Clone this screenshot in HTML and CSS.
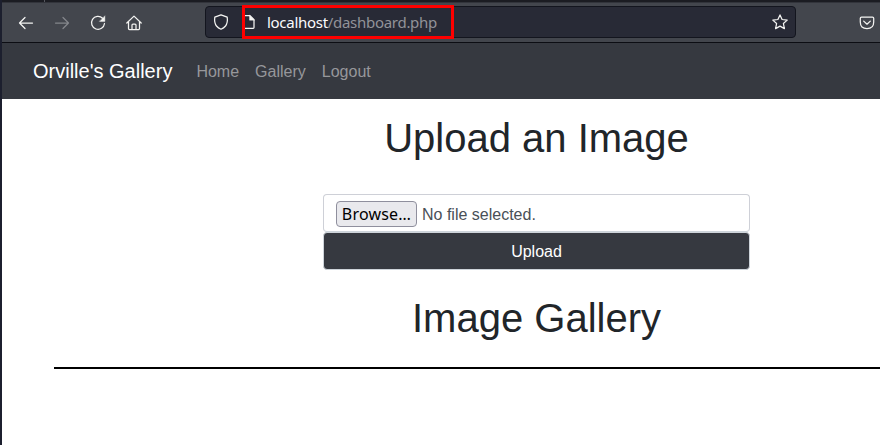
FILE: index.html
```html
<!DOCTYPE html>
<html lang="en">
<head>
<meta charset="utf-8">
<title>Orville's Gallery</title>
<link rel="stylesheet" href="styles.css">
</head>
<body>
<div class="browser">
  <div class="tabstrip"><i></i></div>
  <header class="toolbar">
    <svg class="icon back" viewBox="0 0 16 16"><path d="M14.5 8H1.5M7 2.5L1.5 8L7 13.5"/></svg>
    <svg class="icon forward" viewBox="0 0 16 16"><path d="M1.5 8H14.5M9 2.5L14.5 8L9 13.5"/></svg>
    <svg class="icon reload" viewBox="0 0 16 16"><path d="M12.6 3.2A6.5 6.5 0 1 0 14.5 8.5"/><path class="solid" d="M14.9 1.1V6.4H9.6Z"/></svg>
    <svg class="icon home" viewBox="0 0 16 16"><path d="M.8 8L8 1.1L15.2 8M2.5 7V13.5Q2.5 14.5 3.5 14.5H12.5Q13.5 14.5 13.5 13.5V7M6 14V10Q6 9 7 9H9Q10 9 10 10V14"/></svg>
    <div class="address">
      <svg class="icon shield" viewBox="0 0 16 16"><path d="M8 .8L14.2 3.2Q15 9 12.5 12Q10.8 14 8 15.2Q5.2 14 3.5 12Q1 9 1.8 3.2Z"/></svg>
      <svg class="icon file" viewBox="0 0 16 16"><path d="M3 1.7H9L13 5.7V13.5Q13 14.3 12.2 14.3H3"/><path class="solid" d="M8.5 1.5V6.2H13.3Z"/></svg>
      <span class="url">localhost<span>/dashboard.php</span></span>
      <svg class="icon star" viewBox="0 0 16 16"><path d="M8 .9L10.1 5.5L15.2 6.1L11.4 9.5L12.4 14.6L8 12.1L3.6 14.6L4.6 9.5L.8 6.1L5.9 5.5Z"/></svg>
      <div class="highlight"></div>
    </div>
    <svg class="icon pocket" viewBox="0 0 16 16"><path d="M2.5 2.1H13.5Q14.7 2.1 14.7 3.3V7Q14.7 13.6 8 13.6Q1.3 13.6 1.3 7V3.3Q1.3 2.1 2.5 2.1ZM4.7 6.1L8 9.2L11.3 6.1"/></svg>
  </header>
  <div class="page">
    <nav class="navbar">
      <a class="brand">Orville's Gallery</a>
      <a>Home</a><a>Gallery</a><a>Logout</a>
    </nav>
    <main>
      <h1>Upload an Image</h1>
      <form class="upload">
        <div class="picker"><span class="browse">Browse…</span><span class="status">No file selected.</span></div>
        <div class="submit">Upload</div>
      </form>
      <h1>Image Gallery</h1>
      <div class="rule"></div>
    </main>
  </div>
</div>
</body>
</html>
```
FILE: styles.css
```css
* { box-sizing: border-box; }
body { margin: 0; background: #fff; overflow: hidden; }
.browser { height: 445px; border-left: 2px solid #1c1f2e; overflow: hidden; }
.tabstrip { height: 2px; background: #1b1c22; padding-left: 42px; }
.tabstrip i { display: block; width: 1px; height: 2px; background: #55575e; }
.toolbar {
  height: 41px; display: flex; align-items: center;
  width: 878px; padding-left: 16px; background: #43464d;
  border-top: 1px solid #32343b; border-bottom: 1px solid #0c0d13;
}
.icon {
  width: 16px; height: 16px; flex: none; fill: none; stroke: #f4f4f2;
  stroke-width: 1.25; stroke-linecap: round; stroke-linejoin: round;
}
.solid { fill: #f4f4f2; stroke-width: .4; }
.forward { margin-left: 20px; stroke: #84868b; }
.reload, .home { margin-left: 20px; }
.address {
  position: relative; display: flex; align-items: center;
  width: 591px; height: 32px; margin: 0 0 1px 63px; padding: 0 7px;
  background: #282a36; border: 1px solid #13151e; border-radius: 4px;
}
.file { margin-left: 12px; }
.url {
  margin-left: 10px; font: 15px/20px "Noto Sans", sans-serif; letter-spacing: -.29px;
  color: #fbfbfe; white-space: nowrap;
}
.url span { color: #929299; }
.star { margin-left: auto; }
.highlight { position: absolute; left: 36px; top: -2px; width: 212px; height: 34px; border: 3px solid #fe0000; }
.pocket { margin-left: 63px; }
.page { width: 1069px; font-family: "Liberation Sans", Arial, sans-serif; color: #212529; }
.navbar {
  display: flex; align-items: center; height: 56px; padding-left: 31px;
  background: #363940; font-size: 16px; line-height: 24px; color: #96979b;
}
.navbar a { margin-right: 16px; padding-top: 2px; }
.navbar .brand { font-size: 20px; color: #fff; margin-right: 24px; padding-top: 0; }
h1 { margin: 0; font-size: 40px; line-height: 48px; font-weight: 400; text-align: center; }
main { padding-top: 15px; }
.upload { width: 427px; margin: 32px auto 24px; }
.picker {
  display: flex; align-items: center; height: 38px; padding: 2px 0 0 12px;
  border: 1px solid #ced0d7; border-bottom-color: #cdd4da; border-radius: 4px;
}
.browse {
  width: 81px; height: 26px; background: #e9e9ed; border: 1px solid #8f8f9d;
  border-radius: 4px; color: #000; text-align: center;
  font: 16px/25px "Noto Sans", sans-serif; letter-spacing: .2px;
}
.status { margin-left: 5px; font-size: 16px; line-height: 24px; color: #495057; padding-top: 2px; }
.submit {
  height: 38px; border: 1px solid #ced4da; border-radius: 4px; background: #363940;
  color: #fff; text-align: center; font-size: 16px; line-height: 38px;
}
.rule { width: 965px; height: 2px; margin: 25px auto 0; background: #000; }
```
